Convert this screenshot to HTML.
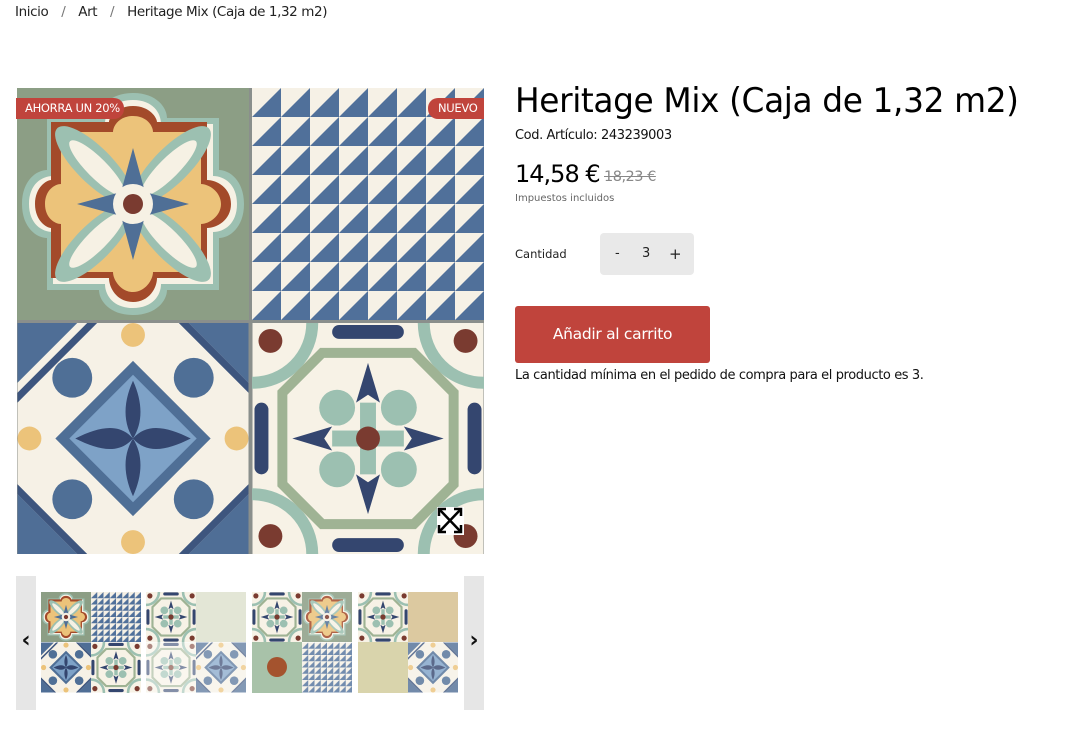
<!DOCTYPE html>
<html><head><meta charset="utf-8"><style>
*{margin:0;padding:0;box-sizing:border-box}
body{width:1078px;height:735px;background:#fff;font-family:"DejaVu Sans","Liberation Sans",sans-serif;color:#111;position:relative;overflow:hidden}
.a{position:absolute;white-space:nowrap}
</style></head><body>
<div class="a" style="left:15px;top:4px;font-size:13.5px;color:#222;letter-spacing:-0.4px">Inicio <span style="color:#777;margin:0 9px">/</span> Art <span style="color:#777;margin:0 9px">/</span> Heritage Mix (Caja de 1,32 m2)</div>

<svg class="a" style="left:17px;top:88px" width="467" height="466" viewBox="0 0 467 466">
<defs>
<symbol id="t1" viewBox="0 0 232 232">
<rect width="232" height="232" fill="#8c9e85"/>
<path d="M116 5 C140 5 150 20 150 30 L202 30 L202 82 C212 82 227 92 227 116 C227 140 212 150 202 150 L202 202 L150 202 C150 212 140 227 116 227 C92 227 82 212 82 202 L30 202 L30 150 C20 150 5 140 5 116 C5 92 20 82 30 82 L30 30 L82 30 C82 20 92 5 116 5Z" fill="#9cc0b1"/>
<path d="M116 12 C136 12 144 25 144 36 L196 36 L196 88 C207 88 220 96 220 116 C220 136 207 144 196 144 L196 196 L144 196 C144 207 136 220 116 220 C96 220 88 207 88 196 L36 196 L36 144 C25 144 12 136 12 116 C12 96 25 88 36 88 L36 36 L88 36 C88 25 96 12 116 12Z" fill="#f6f1e4"/>
<path d="M116 18 C133 18 140 30 140 34 L190 34 L190 92 C200 92 214 100 214 116 C214 132 200 140 190 140 L190 190 L140 190 C140 200 132 214 116 214 C100 214 92 200 92 190 L34 190 L34 140 C30 140 18 133 18 116 C18 99 30 92 34 92 L34 34 L92 34 C92 30 99 18 116 18Z" fill="#a34a2a"/>
<path d="M116 28 C130 28 136 38 136 44 L184 44 L184 96 C192 96 204 104 204 116 C204 128 192 136 184 136 L184 184 L136 184 C136 192 128 204 116 204 C104 204 96 192 96 184 L44 184 L44 136 C38 136 28 130 28 116 C28 102 38 96 44 96 L44 44 L96 44 C96 38 102 28 116 28Z" fill="#ecc37a"/>
<g fill="#9cc0b1"><ellipse cx="155" cy="77" rx="18" ry="52" transform="rotate(45 155 77)"/><ellipse cx="77" cy="77" rx="18" ry="52" transform="rotate(-45 77 77)"/><ellipse cx="155" cy="155" rx="18" ry="52" transform="rotate(-45 155 155)"/><ellipse cx="77" cy="155" rx="18" ry="52" transform="rotate(45 77 155)"/></g>
<g fill="#f6f1e4"><ellipse cx="152" cy="80" rx="10" ry="38" transform="rotate(45 152 80)"/><ellipse cx="80" cy="80" rx="10" ry="38" transform="rotate(-45 80 80)"/><ellipse cx="152" cy="152" rx="10" ry="38" transform="rotate(-45 152 152)"/><ellipse cx="80" cy="152" rx="10" ry="38" transform="rotate(45 80 152)"/></g>
<path d="M116 60 L128 104 L172 116 L128 128 L116 172 L104 128 L60 116 L104 104Z" fill="#4f6f96"/>
<circle cx="116" cy="116" r="20" fill="#f6f1e4"/><circle cx="116" cy="116" r="10" fill="#7a3b30"/>
</symbol>
<pattern id="tri" width="29" height="29" patternUnits="userSpaceOnUse"><rect width="29" height="29" fill="#f6f1e6"/><path d="M29 0 L29 29 L0 29Z" fill="#50709a"/></pattern>
<symbol id="t2" viewBox="0 0 232 232"><rect width="232" height="232" fill="url(#tri)"/></symbol>
<symbol id="t3" viewBox="0 0 232 232">
<rect width="232" height="232" fill="#f6f1e6"/>
<path d="M0 0 L60 0 L0 60Z M232 0 L172 0 L232 60Z M0 232 L60 232 L0 172Z M232 232 L172 232 L232 172Z" fill="#4f6e96"/>
<path d="M0 70 L70 0 L80 0 L0 80Z M162 0 L172 0 L232 60 L232 70Z M0 162 L0 172 L60 232 L70 232Z M232 162 L232 172 L172 232 L162 232Z" fill="#3d557e"/>
<g fill="#ecc37a"><circle cx="116" cy="12" r="12"/><circle cx="116" cy="220" r="12"/><circle cx="12" cy="116" r="12"/><circle cx="220" cy="116" r="12"/></g>
<g fill="#4f6f96"><circle cx="55" cy="55" r="20"/><circle cx="177" cy="55" r="20"/><circle cx="55" cy="177" r="20"/><circle cx="177" cy="177" r="20"/></g>
<path d="M116 38 L194 116 L116 194 L38 116Z" fill="#4f6f96"/>
<path d="M116 52 L180 116 L116 180 L52 116Z" fill="#7ea2c7"/>
<path d="M116 58 C126 80 126 100 116 116 C130 100 150 104 174 116 C150 128 130 132 116 116 C126 132 126 152 116 174 C106 152 106 132 116 116 C102 132 82 128 58 116 C82 104 102 100 116 116 C106 100 106 80 116 58Z" fill="#34466f"/>
</symbol>
<symbol id="t4" viewBox="0 0 232 232">
<rect width="232" height="232" fill="#f7f2e6"/>
<g fill="none" stroke="#9cc0b1" stroke-width="12"><circle cx="0" cy="0" r="60"/><circle cx="232" cy="0" r="60"/><circle cx="0" cy="232" r="60"/><circle cx="232" cy="232" r="60"/></g>
<g fill="#7a3b30"><circle cx="18" cy="18" r="12"/><circle cx="214" cy="18" r="12"/><circle cx="18" cy="214" r="12"/><circle cx="214" cy="214" r="12"/></g>
<path d="M70 30 L162 30 L202 70 L202 162 L162 202 L70 202 L30 162 L30 70Z" fill="none" stroke="#9fb394" stroke-width="10"/>
<g fill="#34466f"><path d="M116 40 L128 80 L116 72 L104 80Z"/><path d="M116 192 L128 152 L116 160 L104 152Z"/><path d="M40 116 L80 128 L72 116 L80 104Z"/><path d="M192 116 L152 128 L160 116 L152 104Z"/><rect x="80" y="2" width="72" height="14" rx="7"/><rect x="80" y="216" width="72" height="14" rx="7"/><rect x="2" y="80" width="14" height="72" rx="7"/><rect x="216" y="80" width="14" height="72" rx="7"/></g>
<g fill="#9cc0b1"><circle cx="85" cy="85" r="18"/><circle cx="147" cy="85" r="18"/><circle cx="85" cy="147" r="18"/><circle cx="147" cy="147" r="18"/><rect x="108" y="80" width="16" height="72"/><rect x="80" y="108" width="72" height="16"/></g>
<circle cx="116" cy="116" r="12" fill="#7a3b30"/>
</symbol>
</defs>
<rect width="467" height="466" fill="#8a8f8c"/>
<use href="#t1" x="0" y="0" width="232" height="232"/>
<use href="#t2" x="235" y="0" width="232" height="232"/>
<use href="#t3" x="0" y="235" width="232" height="231"/>
<use href="#t4" x="235" y="235" width="232" height="231"/>
<rect x="420" y="419" width="27" height="28" fill="#fff"/>
<g stroke="#000" stroke-width="2.5" fill="none"><path d="M422 421 L444 444 M444 421 L422 444"/><path d="M422 428 V421 H429 M437 421 H444 V428 M422 437 V444 H429 M437 444 H444 V437"/></g>
</svg>

<div class="a" style="left:16px;top:98px;height:21px;width:108px;background:#c0443c;border-radius:0 10px 10px 0;color:#fff;font-size:11.5px;line-height:21px;padding-left:9px;letter-spacing:-0.3px">AHORRA UN 20%</div>
<div class="a" style="left:428px;top:98px;height:21px;width:56px;background:#c0443c;border-radius:10px 0 0 10px;color:#fff;font-size:11.5px;line-height:21px;padding-left:10px;letter-spacing:-0.3px">NUEVO</div>

<div class="a" style="left:16px;top:576px;width:20px;height:134px;background:#e6e6e6;font-size:22px;line-height:130px;text-align:center;font-weight:bold">‹</div>
<div class="a" style="left:464px;top:576px;width:20px;height:134px;background:#e6e6e6;font-size:22px;line-height:130px;text-align:center;font-weight:bold">›</div>
<svg class="a" style="left:41px;top:592px" width="420" height="101" viewBox="0 0 420 101">
<use href="#t1" x="0" y="0" width="50" height="50"/><use href="#t2" x="50" y="0" width="50" height="50"/><use href="#t3" x="0" y="50" width="50" height="51"/><use href="#t4" x="50" y="50" width="50" height="51"/>
<use href="#t4" x="105" y="0" width="50" height="50"/><rect x="155" y="0" width="50" height="50" fill="#e3e6d6"/><use href="#t4" x="105" y="50" width="50" height="51" opacity="0.6"/><use href="#t3" x="155" y="50" width="50" height="51" opacity="0.7"/>
<use href="#t4" x="211" y="0" width="50" height="50"/><use href="#t1" x="261" y="0" width="50" height="50" opacity="0.85"/><rect x="211" y="50" width="50" height="51" fill="#a8c2a9"/><circle cx="236" cy="75" r="10" fill="#a4532e"/><use href="#t2" x="261" y="50" width="50" height="51" opacity="0.8"/>
<use href="#t4" x="317" y="0" width="50" height="50"/><rect x="367" y="0" width="50" height="50" fill="#dcc9a0"/><rect x="317" y="50" width="50" height="51" fill="#d9d4ac"/><use href="#t3" x="367" y="50" width="50" height="51" opacity="0.8"/>
</svg>

<div class="a" style="left:515px;top:81px;font-size:34px;color:#000;letter-spacing:-0.4px;transform:scaleX(0.965);transform-origin:left">Heritage Mix (Caja de 1,32 m2)</div>
<div class="a" style="left:515px;top:128px;font-size:13px;color:#111;letter-spacing:-0.4px">Cod. Artículo: 243239003</div>
<div class="a" style="left:515px;top:160px;font-size:24px;color:#000;letter-spacing:-1px">14,58 €</div>
<div class="a" style="left:604px;top:169px;font-size:14.5px;color:#888;text-decoration:line-through;letter-spacing:-0.5px">18,23 €</div>
<div class="a" style="left:515px;top:193px;font-size:10px;color:#666">Impuestos incluidos</div>
<div class="a" style="left:515px;top:247px;font-size:11.5px;color:#222">Cantidad</div>
<div class="a" style="left:600px;top:233px;width:94px;height:42px;background:#e9e9e9;border-radius:4px;font-size:13px;line-height:42px;color:#222"><span style="position:absolute;left:15px">-</span><span style="position:absolute;left:42px">3</span><span style="position:absolute;left:69px;font-size:15px">+</span></div>
<div class="a" style="left:515px;top:306px;width:195px;height:57px;background:#c0443c;border-radius:3px;color:#fff;font-size:15.5px;line-height:57px;text-align:center;letter-spacing:-0.3px">Añadir al carrito</div>
<div class="a" style="left:515px;top:368px;font-size:13px;color:#111;letter-spacing:-0.4px">La cantidad mínima en el pedido de compra para el producto es 3.</div>
</body></html>
